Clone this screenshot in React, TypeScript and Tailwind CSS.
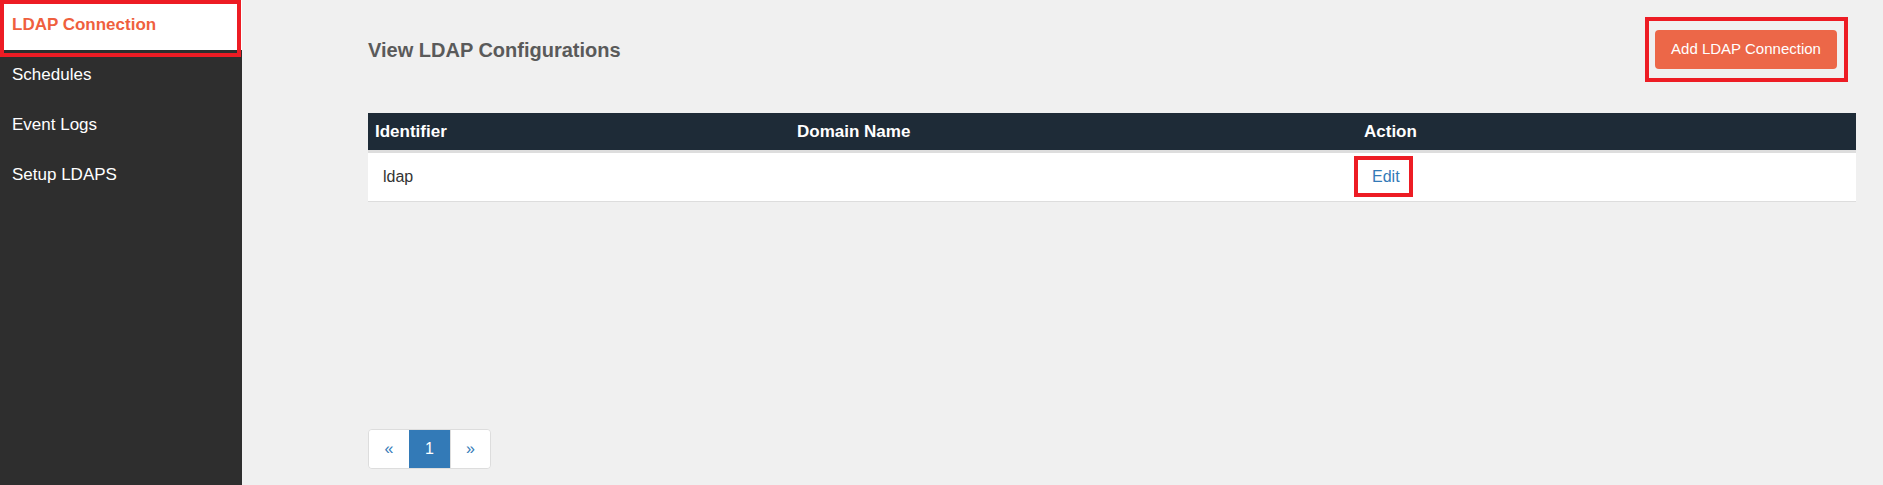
const menu = ["LDAP Connection", "Schedules", "Event Logs", "Setup LDAPS"];

export default function App() {
  return (
    <div className="flex h-[485px] bg-[#f0f0f0] font-['Liberation_Sans',Arial,sans-serif]">
      {/* sidebar */}
      <aside className="relative w-[242px] shrink-0 bg-[#2e2e2e]">
        {menu.map((item, i) => (
          <div
            key={item}
            className={
              i === 0
                ? "flex h-[50px] items-center bg-white px-3 text-[17px] font-bold text-[#ef5f3e]"
                : "flex h-[50px] items-center px-3 text-[17px] text-white"
            }
          >
            {item}
          </div>
        ))}
        <div className="pointer-events-none absolute left-0 top-0 h-[57px] w-[241px] border-[4px] border-[#ed1c24]" />
      </aside>

      {/* main */}
      <main className="flex flex-1 flex-col pl-[126px] pr-[27px] pt-[30px]">
        <div className="flex h-[39px] items-center justify-between">
          <h1 className="text-[20px] font-bold text-[#5a5a5a]">View LDAP Configurations</h1>
          <div className="relative mr-[19px]">
            <button className="h-[39px] w-[182px] rounded-[4px] bg-[#ec6748] text-[15px] text-white">
              Add LDAP Connection
            </button>
            <div className="pointer-events-none absolute -bottom-[13px] -left-[10px] -right-[11px] -top-[13px] border-[4px] border-[#ed1c24]" />
          </div>
        </div>

        <div className="mt-[44px]">
          <div className="grid h-[37px] grid-cols-[422px_567px_1fr] items-center bg-[#1e2b37] text-[17px] font-bold text-white">
            <div className="pl-[7px]">Identifier</div>
            <div className="pl-[7px]">Domain Name</div>
            <div className="pl-[7px]">Action</div>
          </div>
          <div className="h-[3px] bg-[#dddddd]" />
          <div className="grid h-[49px] grid-cols-[422px_567px_1fr] items-center border-b border-[#dddddd] bg-white text-[16px] text-[#333333]">
            <div className="pl-[15px]">ldap</div>
            <div className="pl-[15px]"></div>
            <div className="relative h-full">
              <span className="absolute left-[15px] top-1/2 -translate-y-1/2 text-[#337ab7]">Edit</span>
              <div className="pointer-events-none absolute left-[-3px] top-[3px] h-[41px] w-[59px] border-[4px] border-[#ed1c24]" />
            </div>
          </div>
        </div>

        <div className="mt-[227px] flex">
          <div className="flex h-[40px] overflow-hidden rounded-[4px] border border-[#dddddd] text-[16px]">
            <span className="flex w-[40px] items-center justify-center bg-white text-[#337ab7]">«</span>
            <span className="flex w-[41px] items-center justify-center bg-[#337ab7] text-white">1</span>
            <span className="flex w-[40px] items-center justify-center border-l border-[#dddddd] bg-white text-[#337ab7]">»</span>
          </div>
        </div>
      </main>
    </div>
  );
}
